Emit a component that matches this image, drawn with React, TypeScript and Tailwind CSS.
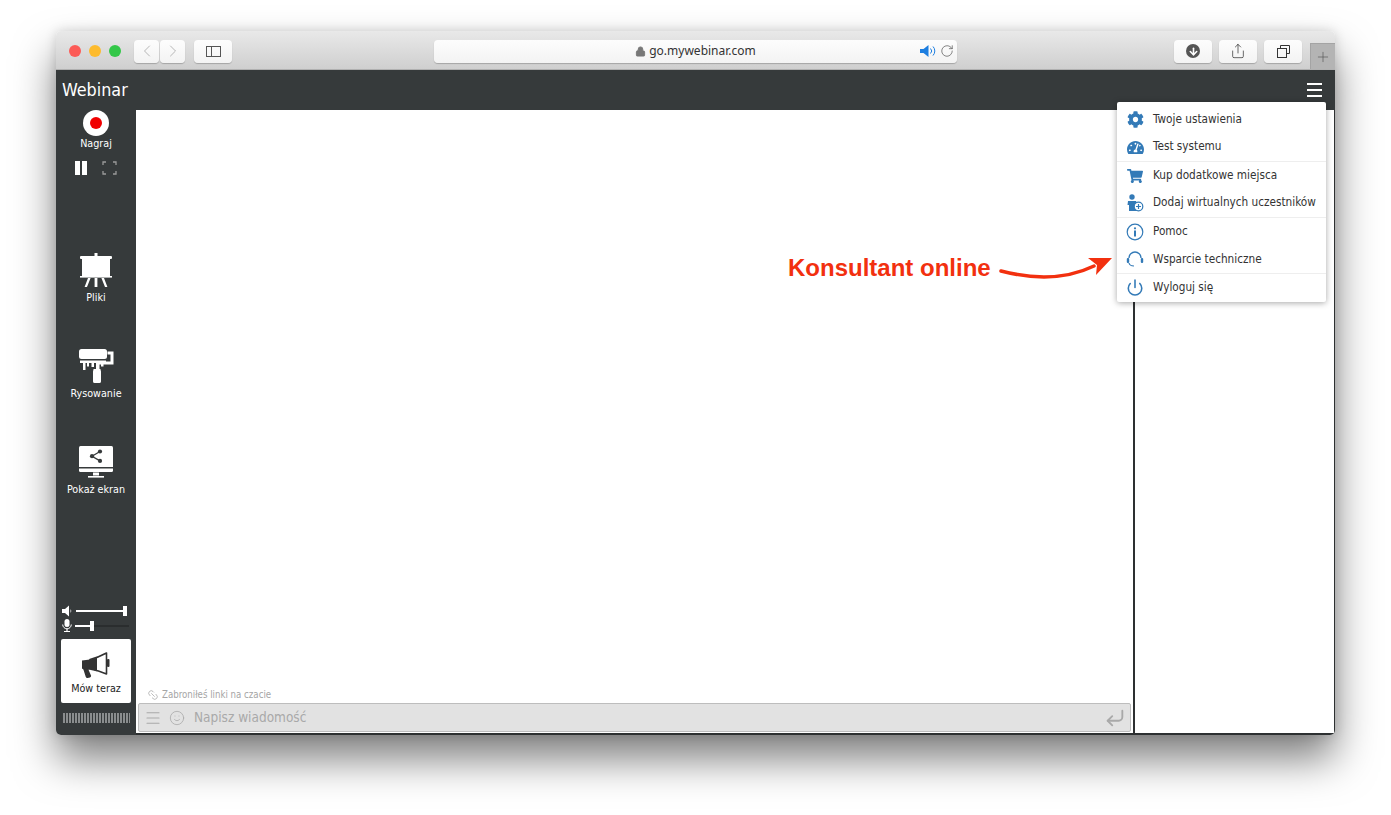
import React from "react";
import { FaCog, FaTachometerAlt, FaShoppingCart } from "react-icons/fa";
import { Power, ChevronLeft, ChevronRight, Lock, RotateCw, Share, Smile, Menu, Link2, CornerDownLeft, Plus, ArrowDown } from "lucide-react";

const Btn = ({ className = "", children }: { className?: string; children?: React.ReactNode }) => (
  <div className={"h-[23px] rounded-[4px] bg-gradient-to-b from-[#fdfdfd] to-[#f3f3f3] shadow-[0_1px_1px_rgba(0,0,0,0.22)] flex items-center justify-center " + className}>{children}</div>
);

const Easel = () => (
  <svg width="34" height="34" viewBox="0 0 34 34" fill="white">
    <rect x="15.500" y="0" width="3" height="3" />
    <rect x="1" y="3" width="32" height="3" rx="1" />
    <rect x="3" y="6" width="28" height="17" />
    <rect x="1" y="23" width="32" height="1.600" />
    <path d="M9 25h2.600L8 34H5.600zM15.600 25h2.800v9h-2.800zM22.400 25H25l3.400 9H26z" />
  </svg>
);

const Roller = () => (
  <svg width="36" height="34" viewBox="0 0 36 34" fill="white">
    <rect x="1" y="0" width="28" height="10" rx="2.500" />
    <path d="M2 11.500h26v2.500h-2.500v3.500h-2.500v-3.500h-1.500v6h-3v-6H16v4h-2.500v-4H11v3.500H9v-3.500H7.500v7H5v-7H2z" />
    <path d="M29.500 2.500h6v13H21v5.500h-3v-8.500h14.500v-7h-3z" />
    <path d="M15.600 20h6.800l.6 2.500v10a1.600 1.600 0 0 1-1.600 1.500h-4.800a1.600 1.600 0 0 1-1.600-1.500v-10z" />
  </svg>
);

const Monitor = () => (
  <svg width="34" height="32" viewBox="0 0 34 32">
    <rect x="0" y="0" width="34" height="26" rx="1.500" fill="white" />
    <rect x="0" y="21" width="34" height="1.500" fill="#363a3b" />
    <path d="M14 26.500h6v3h-6z" fill="white" />
    <rect x="9" y="30" width="16" height="1.600" fill="white" />
    <path d="M21 5.500l-8 4.700 8 4.700" fill="none" stroke="#363a3b" strokeWidth="1.300" />
    <circle cx="21" cy="5.500" r="2.100" fill="#363a3b" />
    <circle cx="13" cy="10.200" r="2.100" fill="#363a3b" />
    <circle cx="21" cy="14.900" r="2.100" fill="#363a3b" />
  </svg>
);

const Megaphone = () => (
  <svg width="30" height="26" viewBox="0 0 30 26">
    <path d="M1 8.500l8-1v10l-1.500.3 2.500 5.600a1.600 1.600 0 0 1-1 2l-2.400.5a1.600 1.600 0 0 1-1.800-1L2.400 17.500 1 16.500z" fill="#333" />
    <path d="M9 7.500C15 6 20 4 25.500 1v21C20 19.500 15 18 9 17z" fill="white" stroke="#333" strokeWidth="1.600" strokeLinejoin="round" />
    <path d="M9 7.500C12 7 14 6.300 16 5.500v13.700C14 18.500 12 17.700 9 17z" fill="#333" />
    <rect x="26" y="7" width="2.500" height="8" rx="1" fill="#333" />
  </svg>
);

const Speaker = () => (
  <svg width="12" height="12" viewBox="0 0 12 12" fill="white"><path d="M0 4h3l4-3.500v11L3 8H0z" /><path d="M8.500 4a3 3 0 0 1 0 4z" /></svg>
);
const Mic = () => (
  <svg width="10" height="13" viewBox="0 0 10 13" fill="white"><rect x="2.500" y="0" width="5" height="8" rx="2.500" /><path d="M.7 5.500a4.300 4.300 0 0 0 8.600 0" fill="none" stroke="white" strokeWidth="1" /><rect x="4.400" y="10" width="1.200" height="2" /><rect x="2" y="12" width="6" height="1" /></svg>
);

const AddUser = () => (
  <svg width="18" height="18" viewBox="0 0 18 18">
    <circle cx="6" cy="3" r="2.700" fill="#337ab7" />
    <path d="M2 7h8l1 3v7H3V11H1.500z" fill="#337ab7" />
    <circle cx="12.500" cy="12.500" r="4.300" fill="white" stroke="#337ab7" strokeWidth="1.200" />
    <path d="M12.500 10v5M10 12.500h5" stroke="#337ab7" strokeWidth="1.200" />
  </svg>
);

const Headset = () => (
  <svg width="18" height="18" viewBox="0 0 18 18" fill="none" stroke="#337ab7">
    <path d="M3 8a6 6 0 0 1 12 0" strokeWidth="1.300" />
    <rect x="0.800" y="8" width="2.400" height="5" rx="1" fill="#337ab7" strokeWidth="0" />
    <rect x="14.800" y="8" width="2.400" height="5" rx="1" fill="#337ab7" strokeWidth="0" />
    <path d="M3 13c.5 2.500 2.500 3 5 3" strokeWidth="1.200" />
  </svg>
);

const InfoIcon = () => (
  <svg width="18" height="18" viewBox="0 0 18 18" fill="none">
    <circle cx="9" cy="9" r="7.800" stroke="#337ab7" strokeWidth="1.200" />
    <circle cx="9" cy="5.300" r="1.100" fill="#337ab7" />
    <rect x="8" y="7.500" width="2" height="6" fill="#337ab7" />
  </svg>
);

type Row = { icon: React.ReactNode; label: string; sep?: boolean };
const rows: Row[] = [
  { icon: <FaCog size={17} color="#337ab7" />, label: "Twoje ustawienia" },
  { icon: <FaTachometerAlt size={17} color="#337ab7" />, label: "Test systemu", sep: true },
  { icon: <FaShoppingCart size={16} color="#337ab7" />, label: "Kup dodatkowe miejsca" },
  { icon: <AddUser />, label: "Dodaj wirtualnych uczestników", sep: true },
  { icon: <InfoIcon />, label: "Pomoc" },
  { icon: <Headset />, label: "Wsparcie techniczne", sep: true },
  { icon: <Power size={19} color="#337ab7" strokeWidth={2.100} />, label: "Wyloguj się" },
];

const SideTool = ({ icon, label, className = "", labelClass = "mt-[4px]" }: { icon: React.ReactNode; label: string; className?: string; labelClass?: string }) => (
  <div className={"flex flex-col items-center " + className}>
    {icon}
    <div className={"text-[10.700px] leading-[14px] text-white whitespace-nowrap " + labelClass}>{label}</div>
  </div>
);

export default function App() {
  const sans = { fontFamily: '"DejaVu Sans Condensed", "DejaVu Sans", sans-serif' };
  return (
    <div className="relative w-[1391px] h-[815px] bg-white overflow-hidden pl-[56px] pt-[31px]" style={sans}>
      <div className="w-[1279px] h-[704px] flex flex-col rounded-[5px] shadow-[0_24px_42px_rgba(0,0,0,0.5),0_0_12px_rgba(0,0,0,0.15)] overflow-hidden bg-white">
        {/* Browser toolbar */}
        <div className="h-[39px] shrink-0 bg-gradient-to-b from-[#e9e9e9] to-[#cfcfcf] border-b border-[#b0b0b0] flex items-center pl-[13px] pt-[2px] relative">
          <div className="w-3 h-3 rounded-full bg-[#fc5b57]" />
          <div className="w-3 h-3 rounded-full bg-[#fdbb2e] ml-2" />
          <div className="w-3 h-3 rounded-full bg-[#33c748] ml-2" />
          <Btn className="w-[25px] ml-[13px]"><ChevronLeft size={20} strokeWidth={1} color="#a8a8a8" /></Btn>
          <Btn className="w-[25px] ml-px"><ChevronRight size={20} strokeWidth={1} color="#a8a8a8" /></Btn>
          <Btn className="w-[38px] ml-[9px]">
            <div className="w-[15px] h-[11px] border border-[#555] flex"><div className="w-[5px] border-r border-[#555]" /></div>
          </Btn>
          <Btn className="w-[523px] ml-[202px] relative text-[12px] text-[#333]">
            <span className="flex items-center" style={{ fontFamily: '"Noto Sans", sans-serif' }}>
              <Lock size={11} color="#777" fill="#777" className="mr-[3px]" />go.mywebinar.com
            </span>
            <div className="absolute right-[3px] top-0 h-full flex items-center gap-[3px]">
              <svg width="17" height="12" viewBox="0 0 17 12"><path d="M0 4h3.500l5-4v12l-5-4H0z" fill="#1d7ee0" /><path d="M10.500 3.500a3.500 3.500 0 0 1 0 5M13 1.500a6.500 6.500 0 0 1 0 9" fill="none" stroke="#1d7ee0" strokeWidth="1" /></svg>
              <RotateCw size={14} strokeWidth={1.200} color="#555" />
            </div>
          </Btn>
          <Btn className="w-[38px] ml-[217px]">
            <div className="w-[14px] h-[14px] rounded-full bg-[#555] flex items-center justify-center"><ArrowDown size={11} strokeWidth={3.500} color="white" /></div>
          </Btn>
          <Btn className="w-[38px] ml-[7px]"><Share size={16} strokeWidth={1.100} color="#333" /></Btn>
          <Btn className="w-[38px] ml-[7px]">
            <svg width="13" height="13" viewBox="0 0 13 13" fill="none" stroke="#333" strokeWidth="1"><path d="M3.500 3.500V.5h9v8h-3" /><rect x=".5" y="3.500" width="9" height="9" /></svg>
          </Btn>
          <div className="absolute right-0 bottom-0 w-[25px] h-[26px] bg-[#b4b4b4] border-l border-t border-[#a4a4a4] flex items-center justify-center">
            <Plus size={16} strokeWidth={1} color="#555" />
          </div>
        </div>
        {/* App top bar */}
        <div className="h-[40px] shrink-0 bg-[#363a3b] flex items-center justify-between pl-[6px] pr-[13px]">
          <div className="text-white text-[17.800px] leading-none">Webinar</div>
          <div className="w-[15px] flex flex-col gap-[4px]">
            <div className="h-[2px] bg-white" /><div className="h-[2px] bg-white" /><div className="h-[2px] bg-white" />
          </div>
        </div>
        {/* Body */}
        <div className="flex-1 flex min-h-0 bg-[#363a3b]">
          <div className="w-[80px] shrink-0 flex flex-col items-center text-white">
            <div className="w-[26px] h-[26px] rounded-full bg-white flex items-center justify-center">
              <div className="w-[12px] h-[12px] rounded-full bg-[#f00000]" />
            </div>
            <div className="text-[10.700px] leading-[14px] mt-px">Nagraj</div>
            <div className="flex items-center gap-[15px] mt-[10px]">
              <div className="flex gap-[2px]"><div className="w-[5px] h-[14px] bg-white" /><div className="w-[5px] h-[14px] bg-white" /></div>
              <svg width="15" height="14" viewBox="0 0 15 14" fill="none" stroke="#9a9a9a" strokeWidth="1.300"><path d="M1 4V1h3M11 1h3v3M14 10v3h-3M4 13H1v-3" /></svg>
            </div>
            <SideTool className="mt-[78px]" icon={<Easel />} label="Pliki" />
            <SideTool className="mt-[44px]" icon={<Roller />} label="Rysowanie" />
            <SideTool className="mt-[45px]" icon={<Monitor />} label="Pokaż ekran" labelClass="mt-[5px]" />
            <div className="mt-auto w-[68px] flex flex-col gap-[2px]">
              <div className="flex items-center gap-[2px] h-[12px]">
                <Speaker />
                <div className="relative w-[50px] h-[2px] bg-white"><div className="absolute right-[-1px] top-[-4px] w-[4px] h-[10px] bg-white" /></div>
              </div>
              <div className="flex items-center gap-[2px] h-[13px]">
                <Mic />
                <div className="relative w-[54px] ml-px h-[2px] bg-[#2a2d2e]">
                  <div className="absolute left-0 top-0 h-[2px] w-[16px] bg-white" />
                  <div className="absolute left-[15px] top-[-4px] w-[4px] h-[10px] bg-white" />
                </div>
              </div>
            </div>
            <div className="mt-[7px] w-[70px] h-[64px] bg-white rounded-[2px] flex flex-col items-center pt-[13px]">
              <Megaphone />
              <div className="text-[10.700px] leading-[14px] text-[#222] mt-[4px]">Mów teraz</div>
            </div>
            <div className="mt-[10px] mb-[12px] w-[67px] h-[10px] bg-[repeating-linear-gradient(90deg,#8a8d8e_0,#8a8d8e_2px,#363a3b_2px,#363a3b_3px)]" />
          </div>
          {/* Main chat column */}
          <div className="flex-1 min-w-0 bg-white border-b-2 border-[#2d3031] flex flex-col justify-end pb-px px-[2px]">
            <div className="flex items-center gap-[3px] text-[9.600px] leading-[14px] text-[#a5a5a5] pl-[9px] mb-px">
              <Link2 size={12} strokeWidth={1.500} color="#aaa" className="rotate-45" />Zabroniłeś linki na czacie
            </div>
            <div className="h-[29px] bg-[#e2e2e2] border border-[#bdbdbd] rounded-[2px] flex items-center pl-[5px] pr-[4px] text-[#a9a9a9]">
              <Menu size={18} strokeWidth={1.500} color="#a9a9a9" />
              <Smile size={16} strokeWidth={1.200} color="#a9a9a9" className="ml-[7px]" />
              <div className="text-[13.500px] ml-[9px]">Napisz wiadomość</div>
              <CornerDownLeft size={22} strokeWidth={2} color="#a9a9a9" className="ml-auto" />
            </div>
          </div>
          <div className="w-[202px] shrink-0 bg-white border-l-2 border-[#2d3031] border-r border-b-2" />
        </div>
      </div>

      {/* Dropdown menu overlay */}
      <div className="absolute left-[1117px] top-[102px] w-[209px] h-[200px] bg-white rounded-[2px] shadow-[0_1px_6px_rgba(0,0,0,0.35)] flex flex-col pt-[3.400px]">
        {rows.map((r) => (
          <div key={r.label} className={"h-[28.500px] flex items-center pl-[9px] text-[11.700px] text-[#333] whitespace-nowrap " + (r.sep ? "border-b border-[#eeeeee]" : "")}>
            <div className="w-[18px] flex justify-center">{r.icon}</div>
            <span className="ml-[9px]">{r.label}</span>
          </div>
        ))}
      </div>

      {/* Annotation */}
      <div className="absolute left-[788px] top-[254px] text-[24px] leading-[28px] font-bold text-[#f2300f]" style={{ fontFamily: '"Liberation Sans", sans-serif' }}>Konsultant online</div>
      <svg className="absolute left-[998px] top-[254px]" width="116" height="28" viewBox="0 0 116 28">
        <path d="M3 17C30 24 65 27 96 12" fill="none" stroke="#f2300f" strokeWidth="3.500" strokeLinecap="round" />
        <path d="M114 4L90 4 L99 11 L98 21z" fill="#f2300f" />
      </svg>
    </div>
  );
}
